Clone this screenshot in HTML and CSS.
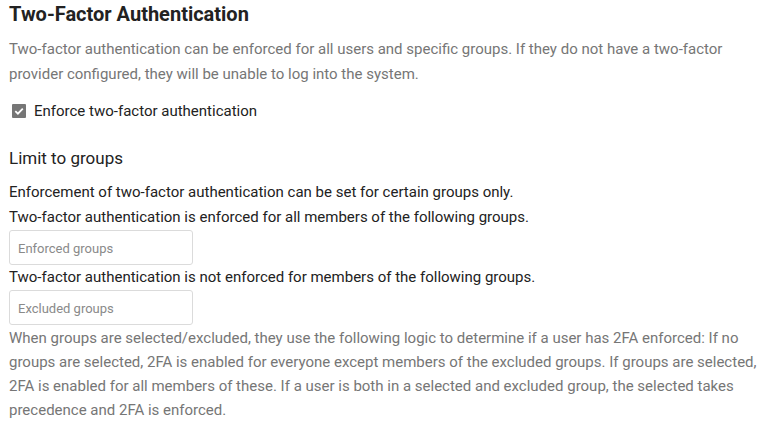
FILE: index.html
```html
<!DOCTYPE html>
<html>
<head>
<meta charset="utf-8">
<link rel="stylesheet" href="styles.css">
</head>
<body>
<div class="section">
  <h2 class="title">Two-Factor Authentication</h2>
  <p class="hint desc">Two-factor authentication can be enforced for all users and specific groups. If they do not have a two-factor provider configured, they will be unable to log into the system.</p>
  <label class="check-row">
    <span class="checkbox">
      <svg width="14" height="14" viewBox="0 0 14 14"><path d="M3.3 7.2 L5.9 9.7 L10.8 4.6" fill="none" stroke="#fff" stroke-width="1.8"/></svg>
    </span>
    <span class="check-label">Enforce two-factor authentication</span>
  </label>
  <h3 class="subtitle">Limit to groups</h3>
  <p class="line first">Enforcement of two-factor authentication can be set for certain groups only.</p>
  <p class="line">Two-factor authentication is enforced for all members of the following groups.</p>
  <div class="field">Enforced groups</div>
  <p class="line">Two-factor authentication is not enforced for members of the following groups.</p>
  <div class="field">Excluded groups</div>
  <p class="hint logic">When groups are selected/excluded, they use the following logic to determine if a user has 2FA enforced: If no groups are selected, 2FA is enabled for everyone except members of the excluded groups. If groups are selected, 2FA is enabled for all members of these. If a user is both in a selected and excluded group, the selected takes precedence and 2FA is enforced.</p>
</div>
</body>
</html>
```
FILE: styles.css
```css
html, body {
  margin: 0;
  padding: 0;
  background: #fff;
}
body {
  font-family: Roboto, "Liberation Sans", sans-serif;
  font-size: 15px;
  color: #222;
}
.section {
  padding: 0 4px 0 9px;
}
.title {
  margin: 0;
  font-size: 20px;
  font-weight: bold;
  line-height: 28px;
  color: #222;
}
p {
  margin: 0;
}
.hint {
  color: #767676;
}
.desc {
  margin-top: 9px;
  line-height: 25px;
}
.check-row {
  display: flex;
  align-items: center;
  gap: 8px;
  margin-top: 11px;
  padding-left: 3px;
  height: 25px;
}
.checkbox {
  width: 14px;
  height: 14px;
  background: #767676;
  border-radius: 1px;
  display: flex;
}
.check-label {
  color: #222;
}
.subtitle {
  margin: 23px 0 0;
  font-size: 17px;
  font-weight: normal;
  line-height: 25px;
  color: #222;
}
.line {
  line-height: 25px;
}
.line.first {
  margin-top: 9px;
}
.field {
  box-sizing: border-box;
  width: 184px;
  height: 35px;
  border: 1px solid #dbdbdb;
  border-radius: 3px;
  padding: 2px 8px 0;
  font-size: 13px;
  color: #8a8a8a;
  display: flex;
  align-items: center;
}
.logic {
  margin-top: 1px;
  line-height: 24px;
}
```
